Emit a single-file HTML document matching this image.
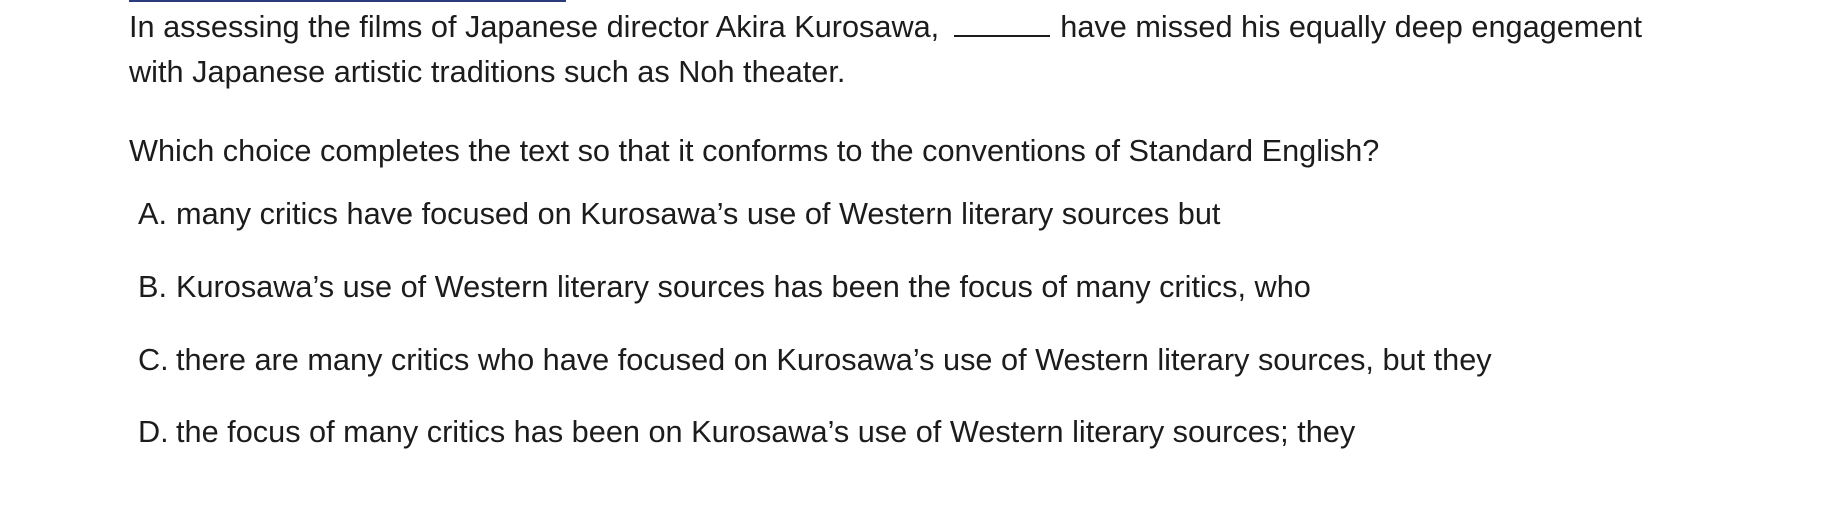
<!DOCTYPE html>
<html><head><style>
html,body{margin:0;padding:0;background:#fff;width:1836px;height:513px;overflow:hidden}
body{font-family:"Liberation Sans",sans-serif;font-size:30.7px;color:#1c1c1c;position:relative}
.l{position:absolute;white-space:nowrap;line-height:36px}
.bar{position:absolute;left:129px;top:0;width:437px;height:2px;background:#2b3a7a}
.blank{display:inline-block;width:96px;border-bottom:2px solid #1c1c1c;height:24px;vertical-align:baseline;margin:0 2px 0 6px}
.o span{display:inline-block;width:38px}
</style></head><body>
<div class="bar"></div>
<div class="l" style="left:129px;top:9px">In assessing the films of Japanese director Akira Kurosawa, <span class="blank"></span> have missed his equally deep engagement</div>
<div class="l" style="left:129px;top:54px">with Japanese artistic traditions such as Noh theater.</div>
<div class="l" style="left:129px;top:133px">Which choice completes the text so that it conforms to the conventions of Standard English?</div>
<div class="l o" style="left:138px;top:196px"><span>A.</span>many critics have focused on Kurosawa’s use of Western literary sources but</div>
<div class="l o" style="left:138px;top:269px"><span>B.</span>Kurosawa’s use of Western literary sources has been the focus of many critics, who</div>
<div class="l o" style="left:138px;top:342px"><span>C.</span>there are many critics who have focused on Kurosawa’s use of Western literary sources, but they</div>
<div class="l o" style="left:138px;top:414px"><span>D.</span>the focus of many critics has been on Kurosawa’s use of Western literary sources; they</div>
</body></html>
